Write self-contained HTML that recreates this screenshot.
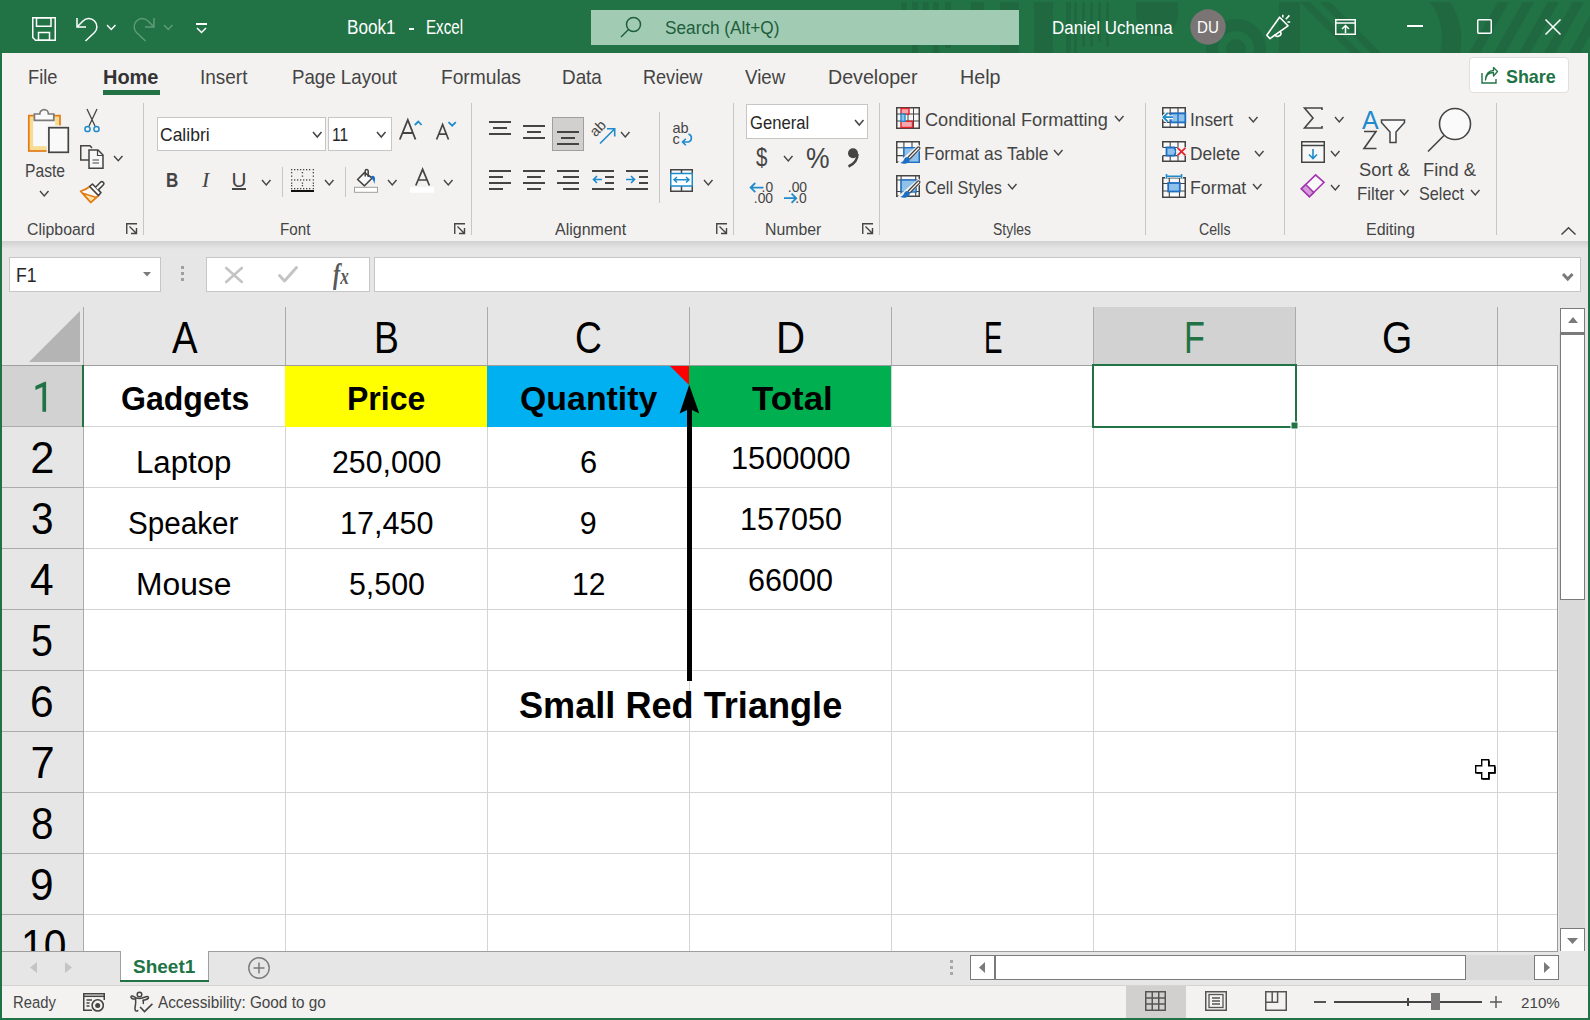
<!DOCTYPE html>
<html><head><meta charset="utf-8">
<style>
*{margin:0;padding:0;box-sizing:border-box}
html,body{width:1590px;height:1020px;overflow:hidden}
body{position:relative;background:#217346;font-family:"Liberation Sans",sans-serif}
.a{position:absolute}
.t{position:absolute;white-space:nowrap;line-height:1;transform-origin:0 0}
svg{position:absolute;overflow:visible}
</style></head><body>
<div class="a" style="left:2px;top:53px;width:1586px;height:188px;background:#f3f2f1;"></div>
<div class="a" style="left:2px;top:241px;width:1586px;height:710px;background:#e6e6e6;"></div>
<div class="a" style="left:2px;top:241px;width:1586px;height:8px;background:linear-gradient(#d0d0d0,#e6e6e6);"></div>
<div class="a" style="left:84px;top:366px;width:1473px;height:585px;background:#ffffff;"></div>
<div class="a" style="left:0px;top:0px;width:1590px;height:53px;background:#217346;"></div>
<svg style="left:0px;top:0px" width="1590" height="53" viewBox="0 0 1590 53"><defs><clipPath id="tb"><rect x="0" y="2" width="1590" height="51"></rect></clipPath></defs>
      <g clip-path="url(#tb)" fill="#1f6840">
      <rect x="901" y="2" width="6" height="8"></rect>
      <rect x="912" y="2" width="6" height="51"></rect>
      <rect x="923" y="2" width="6" height="8"></rect>
      <rect x="933" y="2" width="6" height="51"></rect>
      <rect x="945" y="2" width="6" height="46"></rect>
      <rect x="971" y="2" width="13" height="8"></rect>
      <rect x="1000" y="2" width="19" height="51"></rect>
      <rect x="1034" y="2" width="19" height="51"></rect>
      <rect x="1066" y="2" width="5" height="51"></rect>
      <rect x="1074" y="2" width="3" height="51"></rect>
      <rect x="1082" y="2" width="3" height="45"></rect>
      <rect x="1090" y="2" width="3" height="45"></rect>
      <rect x="1098" y="2" width="3" height="40"></rect>
      <rect x="1106" y="2" width="3" height="45"></rect>
      <path d="M1136 2 H1178 V15 A21 21 0 0 1 1136 15 Z"></path>
      <circle cx="1236" cy="49" r="30"></circle>
      </g>
      <circle cx="1236" cy="49" r="18" fill="#217346" clip-path="url(#tb)"></circle>
      <circle cx="1236" cy="49" r="10" fill="#1f6840" clip-path="url(#tb)"></circle>
      <g clip-path="url(#tb)" fill="#1f6840">
      <path d="M1279 2 H1300 L1300 53 H1279 Z"></path>
      <path d="M1300 2 H1310 L1361 53 H1351 Z"></path>
      <path d="M1320 2 H1330 L1381 53 H1371 Z"></path>
      <path d="M1430 2 A60 60 0 0 1 1440 53 H1460 A70 70 0 0 0 1450 2 Z"></path>

      <path d="M1498 2 H1509 L1480 53 H1469 Z"></path>
      <path d="M1523 2 H1534 L1505 53 H1494 Z"></path>
      <path d="M1548 2 H1559 L1530 53 H1519 Z"></path>
      <path d="M1573 2 H1584 L1555 53 H1544 Z"></path>
      <path d="M1598 2 H1609 L1580 53 H1569 Z"></path>
      </g></svg>
<svg style="left:32px;top:17px" width="24" height="24" viewBox="0 0 24 24"><path d="M0.75 0.75 H23.25 V23.25 H3.5 L0.75 20.5 Z" fill="none" stroke="#ffffff" stroke-width="1.5"></path><rect x="4.5" y="0.75" width="14.5" height="8.5" fill="none" stroke="#ffffff" stroke-width="1.5"></rect><rect x="6.5" y="15.5" width="11" height="7.75" fill="none" stroke="#ffffff" stroke-width="1.5"></rect></svg>
<svg style="left:76px;top:17px" width="22" height="24" viewBox="0 0 22 24"><path d="M1 1 V10 H10" fill="none" stroke="#ffffff" stroke-width="1.5"></path><path d="M1.5 9.5 L7 4 A8 8 0 0 1 18.5 15.5 L9.5 24" fill="none" stroke="#ffffff" stroke-width="1.5"></path></svg>
<svg style="left:105px;top:23px" width="12.5" height="8.5" viewBox="0 0 12.5 8.5"><polyline points="2,2 6.25,6.5 10.5,2" fill="none" stroke="#ffffff" stroke-width="1.4"></polyline></svg>
<svg style="left:133px;top:17px" width="22" height="24" viewBox="0 0 22 24"><path d="M21 1 V10 H12" fill="none" stroke="#5d9c79" stroke-width="1.5"></path><path d="M20.5 9.5 L15 4 A8 8 0 0 0 3.5 15.5 L12.5 24" fill="none" stroke="#5d9c79" stroke-width="1.5"></path></svg>
<svg style="left:162px;top:23px" width="12.5" height="8.5" viewBox="0 0 12.5 8.5"><polyline points="2,2 6.25,6.5 10.5,2" fill="none" stroke="#5d9c79" stroke-width="1.4"></polyline></svg>
<div class="a" style="left:196px;top:23px;width:11px;height:2px;background:#ffffff;"></div>
<svg style="left:195px;top:25.5px" width="13" height="8.5" viewBox="0 0 13 8.5"><polyline points="2,2 6.5,6.5 11,2" fill="none" stroke="#ffffff" stroke-width="1.5"></polyline></svg>
<div class="t" style="left: 347.32px; top: 18.1px; font-size: 19.57px; color: rgb(255, 255, 255); transform: scaleX(0.877);">Book1</div>
<div class="a" style="left:409px;top:28px;width:5px;height:1.6px;background:#ffffff;"></div>
<div class="t" style="left: 425.53px; top: 18.1px; font-size: 19.57px; color: rgb(255, 255, 255); transform: scaleX(0.7744);">Excel</div>
<div class="a" style="left:591px;top:10px;width:428px;height:35px;background:#a1cbb3;"></div>
<svg style="left:620px;top:16px" width="22" height="22" viewBox="0 0 22 22"><circle cx="13.5" cy="8.5" r="7" fill="none" stroke="#1f5e3c" stroke-width="1.5"></circle><line x1="8.5" y1="13.5" x2="1" y2="21" stroke="#1f5e3c" stroke-width="1.5"></line></svg>
<div class="t" style="left: 665px; top: 18.01px; font-size: 19.28px; color: rgb(31, 94, 60); transform: scaleX(0.8939);">Search (Alt+Q)</div>
<div class="t" style="left: 1052.12px; top: 18.01px; font-size: 19.28px; color: rgb(255, 255, 255); transform: scaleX(0.8799);">Daniel Uchenna</div>
<svg style="left:1190px;top:9px" width="36" height="36" viewBox="0 0 36 36"><circle cx="18" cy="18" r="17.7" fill="#7a7574"></circle></svg>
<div class="t" style="left: 1197.09px; top: 20px; font-size: 16.67px; color: rgb(255, 255, 255); transform: scaleX(0.9079);">DU</div>
<svg style="left:1255px;top:8px" width="40" height="35" viewBox="0 0 40 35"><path d="M11.8 27.2 L15 30.6 L33 17.8 L24.6 9.2 Z" fill="none" stroke="#ffffff" stroke-width="1.6" stroke-linejoin="round"></path><path d="M19.6 26.4 A3.2 3.2 0 1 0 25.6 23.8" fill="none" stroke="#ffffff" stroke-width="1.6"></path><path d="M27.8 6.8 V9.6 M30.8 11.2 L34.4 7.4 M32.4 14 H35.2" stroke="#ffffff" stroke-width="1.6"></path></svg>
<svg style="left:1335px;top:19px" width="21" height="16" viewBox="0 0 21 16"><rect x="0.75" y="0.75" width="19.5" height="14.5" fill="none" stroke="#ffffff" stroke-width="1.5"></rect><line x1="1" y1="4" x2="20" y2="4" stroke="#ffffff" stroke-width="1.5"></line><path d="M10.5 14 V6.5 M7 10 L10.5 6.5 L14 10" fill="none" stroke="#ffffff" stroke-width="1.5"></path></svg>
<div class="a" style="left:1407px;top:25.3px;width:16px;height:1.3px;background:#ffffff;"></div>
<svg style="left:1477px;top:19px" width="15" height="15" viewBox="0 0 15 15"><rect x="0.75" y="0.75" width="13.5" height="13.5" rx="1" fill="none" stroke="#ffffff" stroke-width="1.5"></rect></svg>
<svg style="left:1545px;top:19px" width="16" height="16" viewBox="0 0 16 16"><path d="M0.5 0.5 L15.5 15.5 M15.5 0.5 L0.5 15.5" stroke="#ffffff" stroke-width="1.5"></path></svg>
<div class="t" style="left: 27.6px; top: 67px; font-size: 20.29px; color: rgb(68, 68, 68); transform: scaleX(0.9013);">File</div>
<div class="t" style="left: 199.67px; top: 67px; font-size: 20.29px; color: rgb(68, 68, 68); transform: scaleX(0.9344);">Insert</div>
<div class="t" style="left: 292.08px; top: 67px; font-size: 20.29px; color: rgb(68, 68, 68); transform: scaleX(0.9218);">Page Layout</div>
<div class="t" style="left: 441.05px; top: 67px; font-size: 20.29px; color: rgb(68, 68, 68); transform: scaleX(0.9451);">Formulas</div>
<div class="t" style="left: 562.07px; top: 67px; font-size: 20.29px; color: rgb(68, 68, 68); transform: scaleX(0.9304);">Data</div>
<div class="t" style="left: 643.11px; top: 67px; font-size: 20.29px; color: rgb(68, 68, 68); transform: scaleX(0.8914);">Review</div>
<div class="t" style="left: 745.3px; top: 67px; font-size: 20.29px; color: rgb(68, 68, 68); transform: scaleX(0.9216);">View</div>
<div class="t" style="left: 827.63px; top: 67px; font-size: 20.29px; color: rgb(68, 68, 68); transform: scaleX(0.9685);">Developer</div>
<div class="t" style="left: 959.83px; top: 67px; font-size: 20.29px; color: rgb(68, 68, 68); transform: scaleX(0.9695);">Help</div>
<div class="t" style="left: 103.02px; top: 67px; font-size: 20.29px; color: rgb(51, 51, 51); font-weight: bold; transform: scaleX(0.9842);">Home</div>
<div class="a" style="left:103px;top:90px;width:57px;height:5px;background:#217346;"></div>
<div class="a" style="left:1469px;top:57px;width:100px;height:36px;background:#ffffff;border:1px solid #e1dfdd;border-radius:4px"></div>
<svg style="left:1481px;top:67px" width="17" height="17" viewBox="0 0 17 17"><path d="M1 6 V16 H15 V12" fill="none" stroke="#217346" stroke-width="1.4"></path><path d="M4.5 13 C5 7 9 5.5 12.5 5.5 V9 L16.5 4.5 L12.5 0.5 V3.5 C8 3.5 4.5 7 4.5 13z" fill="none" stroke="#217346" stroke-width="1.3" stroke-linejoin="round"></path></svg>
<div class="t" style="left: 1506px; top: 67.31px; font-size: 19.28px; color: rgb(33, 115, 70); font-weight: bold; transform: scaleX(0.9288);">Share</div>
<div class="a" style="left:143px;top:103px;width:1px;height:132px;background:#c8c6c4;"></div>
<div class="a" style="left:471px;top:103px;width:1px;height:132px;background:#c8c6c4;"></div>
<div class="a" style="left:733px;top:103px;width:1px;height:132px;background:#c8c6c4;"></div>
<div class="a" style="left:879px;top:103px;width:1px;height:132px;background:#c8c6c4;"></div>
<div class="a" style="left:1145px;top:103px;width:1px;height:132px;background:#c8c6c4;"></div>
<div class="a" style="left:1284px;top:103px;width:1px;height:132px;background:#c8c6c4;"></div>
<div class="a" style="left:1496px;top:103px;width:1px;height:132px;background:#c8c6c4;"></div>
<div class="t" style="left: 26.5px; top: 222.01px; font-size: 15.94px; color: rgb(68, 68, 68); transform: scaleX(0.9948);">Clipboard</div>
<div class="t" style="left: 280.05px; top: 222.01px; font-size: 15.94px; color: rgb(68, 68, 68); transform: scaleX(0.9535);">Font</div>
<div class="t" style="left: 554.5px; top: 222.01px; font-size: 15.94px; color: rgb(68, 68, 68); transform: scaleX(1.0036);">Alignment</div>
<div class="t" style="left: 765.01px; top: 222.01px; font-size: 15.94px; color: rgb(68, 68, 68); transform: scaleX(0.9933);">Number</div>
<div class="t" style="left: 993px; top: 222.01px; font-size: 15.94px; color: rgb(68, 68, 68); transform: scaleX(0.8749);">Styles</div>
<div class="t" style="left: 1199px; top: 222.01px; font-size: 15.94px; color: rgb(68, 68, 68); transform: scaleX(0.8885);">Cells</div>
<div class="t" style="left: 1366px; top: 222.01px; font-size: 15.94px; color: rgb(68, 68, 68); transform: scaleX(1.0028);">Editing</div>
<svg style="left:126px;top:223px" width="12" height="12" viewBox="0 0 12 12"><path d="M0.75 11 V0.75 H11" fill="none" stroke="#444444" stroke-width="1.4"></path><path d="M3.5 3.5 L10.5 10.5 M5 10.5 H10.5 V5" fill="none" stroke="#444444" stroke-width="1.4"></path></svg>
<svg style="left:454px;top:223px" width="12" height="12" viewBox="0 0 12 12"><path d="M0.75 11 V0.75 H11" fill="none" stroke="#444444" stroke-width="1.4"></path><path d="M3.5 3.5 L10.5 10.5 M5 10.5 H10.5 V5" fill="none" stroke="#444444" stroke-width="1.4"></path></svg>
<svg style="left:716px;top:223px" width="12" height="12" viewBox="0 0 12 12"><path d="M0.75 11 V0.75 H11" fill="none" stroke="#444444" stroke-width="1.4"></path><path d="M3.5 3.5 L10.5 10.5 M5 10.5 H10.5 V5" fill="none" stroke="#444444" stroke-width="1.4"></path></svg>
<svg style="left:862px;top:223px" width="12" height="12" viewBox="0 0 12 12"><path d="M0.75 11 V0.75 H11" fill="none" stroke="#444444" stroke-width="1.4"></path><path d="M3.5 3.5 L10.5 10.5 M5 10.5 H10.5 V5" fill="none" stroke="#444444" stroke-width="1.4"></path></svg>
<svg style="left:1561px;top:227px" width="15" height="8" viewBox="0 0 15 8"><polyline points="0.5,7.5 7.5,0.8 14.5,7.5" fill="none" stroke="#444444" stroke-width="1.5"></polyline></svg>
<svg style="left:28px;top:109px" width="42" height="46" viewBox="0 0 42 46">
      <rect x="0.8" y="6.6" width="31.2" height="35.4" fill="#f9dc93" stroke="#e27c13" stroke-width="1.7"></rect>
      <rect x="5.1" y="10.9" width="22" height="26.2" fill="#f9f9f9"></rect>
      <path d="M6.4 11.4 V5 H11.8 A4.3 4.3 0 0 1 20.4 5 H25.8 V11.4 Z" fill="#f9f9f9" stroke="#7a7a7a" stroke-width="1.7"></path>
      <rect x="18.6" y="16.4" width="24" height="30" fill="#f3f2f1"></rect>
      <rect x="20.9" y="18.7" width="19.4" height="24.6" fill="#f9f9f9" stroke="#444444" stroke-width="1.7"></rect></svg>
<div class="t" style="left: 24.64px; top: 161.6px; font-size: 18.26px; color: rgb(68, 68, 68); transform: scaleX(0.8568);">Paste</div>
<svg style="left:38px;top:189px" width="12.5" height="9" viewBox="0 0 12.5 9"><polyline points="2,2 6.25,7 10.5,2" fill="none" stroke="#444444" stroke-width="1.4"></polyline></svg>
<svg style="left:84px;top:109px" width="16" height="24" viewBox="0 0 16 24"><path d="M3 0 L11 17 M13 0 L5 17" stroke="#444444" stroke-width="1.3" fill="none"></path><circle cx="3.5" cy="20" r="2.6" fill="none" stroke="#1e8bcd" stroke-width="1.5"></circle><circle cx="12.5" cy="20" r="2.6" fill="none" stroke="#1e8bcd" stroke-width="1.5"></circle></svg>
<svg style="left:80px;top:145px" width="24" height="24" viewBox="0 0 24 24"><path d="M11 15 H0.75 V0.75 H10 L12 3" fill="none" stroke="#444444" stroke-width="1.5"></path><path d="M9 5 H18 L23 10 V23.25 H9 Z" fill="#f7f7f7" stroke="#444444" stroke-width="1.5"></path><path d="M17.5 5 V10.5 H23" fill="none" stroke="#444444" stroke-width="1.2"></path><path d="M12.5 15 H19 M12.5 18 H19" stroke="#444444" stroke-width="1.2"></path></svg>
<svg style="left:112px;top:154px" width="12.5" height="8.8" viewBox="0 0 12.5 8.8"><polyline points="2,2 6.25,6.8 10.5,2" fill="none" stroke="#444444" stroke-width="1.4"></polyline></svg>
<svg style="left:80px;top:180px" width="25" height="25" viewBox="0 0 25 25"><path d="M9.7 6.5 Q6 9.8 0.6 11.2 L10.7 22.5 L18.5 15.5 Z" fill="#f9f9f9" stroke="#e27c13" stroke-width="1.7" stroke-linejoin="round"></path><path d="M2.8 13.3 L16.3 17.5 L10.7 22.3 Z" fill="#fde3a7" stroke="#e27c13" stroke-width="1.5" stroke-linejoin="round"></path><path d="M9.7 6.5 L12.4 4 L21 12.6 L18.5 15.5 Z" fill="#fff" stroke="#444444" stroke-width="1.6" stroke-linejoin="round"></path><path d="M15.6 7.2 L20.5 2.3 A1.9 1.9 0 0 1 23.2 5 L18.3 9.9" fill="#fff" stroke="#444444" stroke-width="1.6"></path></svg>
<div class="a" style="left:157px;top:117px;width:169px;height:34px;background:#ffffff;border:1px solid #c8c6c4"></div>
<div class="t" style="left: 159.5px; top: 126.01px; font-size: 18.84px; color: rgb(38, 38, 38); transform: scaleX(0.9296);">Calibri</div>
<svg style="left:311px;top:130px" width="12.5" height="9" viewBox="0 0 12.5 9"><polyline points="2,2 6.25,7 10.5,2" fill="none" stroke="#444444" stroke-width="1.5"></polyline></svg>
<div class="a" style="left:328px;top:117px;width:64px;height:34px;background:#ffffff;border:1px solid #c8c6c4"></div>
<div class="t" style="left: 331.67px; top: 126.01px; font-size: 18.84px; color: rgb(38, 38, 38); transform: scaleX(0.83);">11</div>
<svg style="left:374.5px;top:130px" width="12.5" height="9" viewBox="0 0 12.5 9"><polyline points="2,2 6.25,7 10.5,2" fill="none" stroke="#444444" stroke-width="1.5"></polyline></svg>
<svg style="left:395px;top:112px" width="65" height="32" viewBox="0 0 65 32"><path d="M4.8 27.5 L12.8 8 L20.5 27.5 M7.4 21 H18" fill="none" stroke="#444444" stroke-width="1.8" stroke-linejoin="miter"></path>
      <polyline points="19.8,13 23.3,9.5 26.6,13" fill="none" stroke="#1e8bcd" stroke-width="1.8"></polyline>
      <path d="M41.6 27.5 L47.6 12.5 L53.5 27.5 M43.6 22.2 H51.6" fill="none" stroke="#444444" stroke-width="1.7"></path>
      <polyline points="53.5,10.1 57.2,13.7 60.8,10.1" fill="none" stroke="#1e8bcd" stroke-width="1.8"></polyline></svg>
<div class="t" style="left: 166.18px; top: 169.61px; font-size: 20.72px; color: rgb(68, 68, 68); font-weight: bold; transform: scaleX(0.8214);">B</div>
<div class="t" style="left: 202.06px; top: 169.61px; font-size: 20.72px; color: rgb(68, 68, 68); font-style: italic; font-family: &quot;Liberation Serif&quot;, serif; transform: scaleX(1.0556);">I</div>
<div class="t" style="left: 231.5px; top: 169.61px; font-size: 20.72px; color: rgb(68, 68, 68); transform: scaleX(1);">U</div>
<div class="a" style="left:232px;top:188px;width:14px;height:1.5px;background:#444444;"></div>
<svg style="left:260px;top:178px" width="12.5" height="9" viewBox="0 0 12.5 9"><polyline points="2,2 6.25,7 10.5,2" fill="none" stroke="#444444" stroke-width="1.4"></polyline></svg>
<div class="a" style="left:282px;top:167px;width:1px;height:30px;background:#c8c6c4;"></div>
<svg style="left:291px;top:169px" width="23" height="23" viewBox="0 0 23 23"><g fill="#444444"><rect x="0" y="0" width="1.3" height="1.3"></rect><rect x="3" y="0" width="1.3" height="1.3"></rect><rect x="6" y="0" width="1.3" height="1.3"></rect><rect x="9" y="0" width="1.3" height="1.3"></rect><rect x="12" y="0" width="1.3" height="1.3"></rect><rect x="15" y="0" width="1.3" height="1.3"></rect><rect x="18" y="0" width="1.3" height="1.3"></rect><rect x="21.7" y="0" width="1.3" height="1.3"></rect><rect x="0" y="10.3" width="1.3" height="1.3"></rect><rect x="3" y="10.3" width="1.3" height="1.3"></rect><rect x="6" y="10.3" width="1.3" height="1.3"></rect><rect x="9" y="10.3" width="1.3" height="1.3"></rect><rect x="12" y="10.3" width="1.3" height="1.3"></rect><rect x="15" y="10.3" width="1.3" height="1.3"></rect><rect x="18" y="10.3" width="1.3" height="1.3"></rect><rect x="21.7" y="10.3" width="1.3" height="1.3"></rect><rect x="0" y="19" width="1.3" height="1.3"></rect><rect x="3" y="19" width="1.3" height="1.3"></rect><rect x="6" y="19" width="1.3" height="1.3"></rect><rect x="9" y="19" width="1.3" height="1.3"></rect><rect x="12" y="19" width="1.3" height="1.3"></rect><rect x="15" y="19" width="1.3" height="1.3"></rect><rect x="18" y="19" width="1.3" height="1.3"></rect><rect x="21.7" y="19" width="1.3" height="1.3"></rect><rect x="0" y="3" width="1.3" height="1.3"></rect><rect x="0" y="6.5" width="1.3" height="1.3"></rect><rect x="0" y="13.5" width="1.3" height="1.3"></rect><rect x="0" y="16" width="1.3" height="1.3"></rect><rect x="10.8" y="3" width="1.3" height="1.3"></rect><rect x="10.8" y="6.5" width="1.3" height="1.3"></rect><rect x="10.8" y="13.5" width="1.3" height="1.3"></rect><rect x="10.8" y="16" width="1.3" height="1.3"></rect><rect x="21.7" y="3" width="1.3" height="1.3"></rect><rect x="21.7" y="6.5" width="1.3" height="1.3"></rect><rect x="21.7" y="13.5" width="1.3" height="1.3"></rect><rect x="21.7" y="16" width="1.3" height="1.3"></rect></g>
      <rect x="0" y="21" width="23" height="2" fill="#111"></rect></svg>
<svg style="left:323px;top:178px" width="12.5" height="9" viewBox="0 0 12.5 9"><polyline points="2,2 6.25,7 10.5,2" fill="none" stroke="#444444" stroke-width="1.4"></polyline></svg>
<div class="a" style="left:345px;top:167px;width:1px;height:30px;background:#c8c6c4;"></div>
<svg style="left:354px;top:168px" width="25" height="26" viewBox="0 0 25 26"><path d="M3.6 11.5 L10.5 4.6 L18.2 10 L10.5 17.8 Z" fill="#f9f9f9" stroke="#444444" stroke-width="1.6" stroke-linejoin="round"></path>
      <path d="M11.2 8.5 V3 A1.5 1.5 0 0 1 14.2 3 V9" fill="none" stroke="#444444" stroke-width="1.5"></path>
      <path d="M17 8.5 C19.5 6.5 21.5 8.5 21 12 C20.8 14 20.5 15 20.3 16 C19.8 13.5 19.3 11.8 17.5 10.5 Z" fill="#1e6fc4"></path>
      <rect x="0.5" y="19.3" width="23" height="5" fill="#ffffff" stroke="#a19f9d" stroke-width="1"></rect></svg>
<svg style="left:386px;top:178px" width="12.5" height="9" viewBox="0 0 12.5 9"><polyline points="2,2 6.25,7 10.5,2" fill="none" stroke="#444444" stroke-width="1.4"></polyline></svg>
<svg style="left:410px;top:168px" width="25" height="26" viewBox="0 0 25 26"><path d="M5.8 17.5 L12.6 1.3 L19.4 17.5 M8.2 12 H17" fill="none" stroke="#444444" stroke-width="1.7"></path><rect x="0" y="19.2" width="24" height="5.5" fill="#ffffff"></rect></svg>
<svg style="left:442px;top:178px" width="12.5" height="9" viewBox="0 0 12.5 9"><polyline points="2,2 6.25,7 10.5,2" fill="none" stroke="#444444" stroke-width="1.4"></polyline></svg>
<div class="a" style="left:489px;top:121px;width:22px;height:2px;background:#444444;"></div>
<div class="a" style="left:493px;top:127px;width:14px;height:2px;background:#444444;"></div>
<div class="a" style="left:489px;top:133px;width:22px;height:2px;background:#444444;"></div>
<div class="a" style="left:523px;top:125px;width:22px;height:2px;background:#444444;"></div>
<div class="a" style="left:527px;top:131px;width:14px;height:2px;background:#444444;"></div>
<div class="a" style="left:523px;top:137px;width:22px;height:2px;background:#444444;"></div>
<div class="a" style="left:552px;top:117px;width:32px;height:34px;background:#d2d0ce;border:1px solid #a19f9d"></div>
<div class="a" style="left:557px;top:131px;width:22px;height:2px;background:#444444;"></div>
<div class="a" style="left:561px;top:137px;width:14px;height:2px;background:#444444;"></div>
<div class="a" style="left:557px;top:143px;width:22px;height:2px;background:#444444;"></div>
<svg style="left:591px;top:120px" width="26" height="25" viewBox="0 0 26 25"><text x="0" y="0" transform="translate(4.5,17.5) rotate(-45)" font-family="Liberation Sans" font-size="14.5" fill="#444444">ab</text><path d="M9 23.5 L23 9.5 M16 8.8 H23.7 V16.5" fill="none" stroke="#1e8bcd" stroke-width="1.6"></path></svg>
<svg style="left:619px;top:130px" width="12.5" height="9" viewBox="0 0 12.5 9"><polyline points="2,2 6.25,7 10.5,2" fill="none" stroke="#444444" stroke-width="1.4"></polyline></svg>
<div class="a" style="left:659px;top:112px;width:1px;height:91px;background:#c8c6c4;"></div>
<svg style="left:673px;top:121px" width="24" height="26" viewBox="0 0 24 26"><text x="-0.5" y="11.5" font-family="Liberation Sans" font-size="14.5" fill="#444444">ab</text><text x="-0.5" y="22.5" font-family="Liberation Sans" font-size="14.5" fill="#444444">c</text><path d="M15.5 13 A4.2 4.2 0 0 1 15.5 21 H9.5 M12.8 17.7 L9.5 21 L12.8 24.3" fill="none" stroke="#1e8bcd" stroke-width="1.6"></path></svg>
<div class="a" style="left:489px;top:170px;width:22px;height:2px;background:#444444;"></div>
<div class="a" style="left:489px;top:176px;width:14px;height:2px;background:#444444;"></div>
<div class="a" style="left:489px;top:182px;width:22px;height:2px;background:#444444;"></div>
<div class="a" style="left:489px;top:188px;width:14px;height:2px;background:#444444;"></div>
<div class="a" style="left:523px;top:170px;width:22px;height:2px;background:#444444;"></div>
<div class="a" style="left:527px;top:176px;width:14px;height:2px;background:#444444;"></div>
<div class="a" style="left:523px;top:182px;width:22px;height:2px;background:#444444;"></div>
<div class="a" style="left:527px;top:188px;width:14px;height:2px;background:#444444;"></div>
<div class="a" style="left:557px;top:170px;width:22px;height:2px;background:#444444;"></div>
<div class="a" style="left:563px;top:176px;width:16px;height:2px;background:#444444;"></div>
<div class="a" style="left:557px;top:182px;width:22px;height:2px;background:#444444;"></div>
<div class="a" style="left:563px;top:188px;width:16px;height:2px;background:#444444;"></div>
<div class="a" style="left:592px;top:170px;width:22px;height:2px;background:#444444;"></div>
<div class="a" style="left:605px;top:176px;width:9px;height:2px;background:#444444;"></div>
<div class="a" style="left:605px;top:182px;width:9px;height:2px;background:#444444;"></div>
<div class="a" style="left:592px;top:188px;width:22px;height:2px;background:#444444;"></div>
<svg style="left:592px;top:175px" width="10" height="10" viewBox="0 0 10 10"><path d="M10 4.5 H1.5 M5 1 L1.5 4.5 L5 8" fill="none" stroke="#1e8bcd" stroke-width="1.6"></path></svg>
<div class="a" style="left:626px;top:170px;width:22px;height:2px;background:#444444;"></div>
<div class="a" style="left:639px;top:176px;width:9px;height:2px;background:#444444;"></div>
<div class="a" style="left:639px;top:182px;width:9px;height:2px;background:#444444;"></div>
<div class="a" style="left:626px;top:188px;width:22px;height:2px;background:#444444;"></div>
<svg style="left:626px;top:175px" width="10" height="10" viewBox="0 0 10 10"><path d="M0 4.5 H8.5 M5 1 L8.5 4.5 L5 8" fill="none" stroke="#1e8bcd" stroke-width="1.6"></path></svg>
<svg style="left:670px;top:169px" width="23" height="23" viewBox="0 0 23 23"><rect x="0.75" y="0.75" width="21.5" height="21.5" fill="#f7f7f7" stroke="#444444" stroke-width="1.5"></rect><line x1="11.5" y1="1" x2="11.5" y2="5" stroke="#444444" stroke-width="1.5"></line><line x1="11.5" y1="17" x2="11.5" y2="22" stroke="#444444" stroke-width="1.5"></line><rect x="0.75" y="4.5" width="21.5" height="12.5" fill="#ffffff" stroke="#1e8bcd" stroke-width="1.5"></rect><path d="M4 10.75 H19 M7 8 L4 10.75 L7 13.5 M16 8 L19 10.75 L16 13.5" fill="none" stroke="#1e8bcd" stroke-width="1.5"></path></svg>
<svg style="left:702px;top:178px" width="12.5" height="9" viewBox="0 0 12.5 9"><polyline points="2,2 6.25,7 10.5,2" fill="none" stroke="#444444" stroke-width="1.4"></polyline></svg>
<div class="a" style="left:746px;top:104px;width:122px;height:35px;background:#ffffff;border:1px solid #c8c6c4"></div>
<div class="t" style="left: 749.5px; top: 113.01px; font-size: 19.13px; color: rgb(38, 38, 38); transform: scaleX(0.8691);">General</div>
<svg style="left:853px;top:118px" width="12.5" height="9" viewBox="0 0 12.5 9"><polyline points="2,2 6.25,7 10.5,2" fill="none" stroke="#444444" stroke-width="1.5"></polyline></svg>
<div class="t" style="left: 755.5px; top: 145.01px; color: rgb(68, 68, 68); font-size: 25px; transform: scaleX(0.8214);">$</div>
<svg style="left:782px;top:154px" width="12.5" height="9" viewBox="0 0 12.5 9"><polyline points="2,2 6.25,7 10.5,2" fill="none" stroke="#444444" stroke-width="1.4"></polyline></svg>
<div class="t" style="left: 806.12px; top: 142.5px; font-size: 30.14px; color: rgb(68, 68, 68); transform: scaleX(0.88);">%</div>
<svg style="left:847px;top:148px" width="12" height="19" viewBox="0 0 12 19"><circle cx="6" cy="5.2" r="5" fill="#444444"></circle><path d="M10.5 6 C10.5 12 7 16 1.5 18.5" fill="none" stroke="#444444" stroke-width="2.6"></path></svg>
<svg style="left:745px;top:175px" width="65" height="32" viewBox="0 0 65 32"><text x="16.6" y="16.5" font-family="Liberation Sans" font-size="14.5" fill="#444" lengthAdjust="spacingAndGlyphs" textLength="11.5">.0</text><text x="8.8" y="28.4" font-family="Liberation Sans" font-size="14.5" fill="#444" lengthAdjust="spacingAndGlyphs" textLength="19.3">.00</text>
      <path d="M18.5 12.6 H5.6 M10.3 8 L5.6 12.6 L10.3 17.2" fill="none" stroke="#1e8bcd" stroke-width="1.8"></path>
      <text x="42.8" y="16.5" font-family="Liberation Sans" font-size="14.5" fill="#444" lengthAdjust="spacingAndGlyphs" textLength="19.3">.00</text><text x="50.2" y="28.4" font-family="Liberation Sans" font-size="14.5" fill="#444" lengthAdjust="spacingAndGlyphs" textLength="11.5">.0</text>
      <path d="M39 23.2 H51.2 M46.6 18.6 L51.2 23.2 L46.6 27.8" fill="none" stroke="#1e8bcd" stroke-width="1.8"></path></svg>
<svg style="left:896px;top:107px" width="24" height="22" viewBox="0 0 24 22"><rect x="0.75" y="0.75" width="22.5" height="20.5" fill="#f7f7f7" stroke="#444444" stroke-width="1.5"></rect>
      <path d="M1 7 H23 M1 14 H23 M12 1 V21 M17.5 1 V21 M6 1 V21" stroke="#444444" stroke-width="1"></path>
      <rect x="5" y="1.5" width="8" height="5.5" fill="#f4a7ae" stroke="#e3242b" stroke-width="1.4"></rect>
      <rect x="5" y="14.3" width="11.5" height="6.2" fill="#f4a7ae" stroke="#e3242b" stroke-width="1.4"></rect>
      <rect x="5" y="7" width="4" height="7.3" fill="#8fc1ea" stroke="#1e8bcd" stroke-width="1.4"></rect></svg>
<div class="t" style="left: 924.5px; top: 110.81px; font-size: 18.55px; color: rgb(68, 68, 68); transform: scaleX(0.9805);">Conditional Formatting</div>
<svg style="left:1112.5px;top:114px" width="12.5" height="9" viewBox="0 0 12.5 9"><polyline points="2,2 6.25,7 10.5,2" fill="none" stroke="#444444" stroke-width="1.4"></polyline></svg>
<svg style="left:896px;top:141px" width="25" height="24" viewBox="0 0 25 24"><rect x="0.75" y="0.75" width="22.5" height="20.5" fill="#f9f9f9" stroke="#444444" stroke-width="1.5"></rect>
      <path d="M1 6.7 H23 M1 14.6 H23 M7.9 1 V21 M16 1 V21" stroke="#444444" stroke-width="1.1"></path>
      <rect x="7.9" y="6.7" width="15.3" height="14.6" fill="#8fc1ea" stroke="#1e6fc4" stroke-width="1.4"></rect>
      <path d="M3.5 23.5 L24.5 5.5" stroke="#f3f2f1" stroke-width="5.5"></path>
      <path d="M22.6 7.2 L13.4 16.6" stroke="#444444" stroke-width="3.8" stroke-linecap="round"></path><path d="M22.6 7.2 L13.4 16.6" stroke="#fafafa" stroke-width="1.3" stroke-linecap="round"></path>
      <path d="M12.8 16.6 C11.2 15.4 9 16.2 8.2 18.2 C7.4 20.2 6.2 21.3 4.2 21.8 C6.8 23.3 10.8 23.2 12.8 21 C13.9 19.8 14.2 17.8 12.8 16.6 Z" fill="#1e6fc4"></path></svg>
<div class="t" style="left: 923.58px; top: 144.81px; font-size: 18.84px; color: rgb(68, 68, 68); transform: scaleX(0.925);">Format as Table</div>
<svg style="left:1052px;top:148px" width="12.5" height="9" viewBox="0 0 12.5 9"><polyline points="2,2 6.25,7 10.5,2" fill="none" stroke="#444444" stroke-width="1.4"></polyline></svg>
<svg style="left:896px;top:175px" width="25" height="24" viewBox="0 0 25 24"><rect x="0.75" y="0.75" width="22.5" height="20.5" fill="#f9f9f9" stroke="#444444" stroke-width="1.5"></rect>
      <path d="M1 5 H23 M1 16.5 H23 M5.1 1 V21 M19.7 1 V21" stroke="#444444" stroke-width="1.1"></path>
      <rect x="5.1" y="5" width="15" height="12" fill="#8fc1ea" stroke="#1e6fc4" stroke-width="1.4"></rect>
      <path d="M3.5 23.5 L24.5 5.5" stroke="#f3f2f1" stroke-width="5.5"></path>
      <path d="M22.6 7.2 L13.4 16.6" stroke="#444444" stroke-width="3.8" stroke-linecap="round"></path><path d="M22.6 7.2 L13.4 16.6" stroke="#fafafa" stroke-width="1.3" stroke-linecap="round"></path>
      <path d="M12.8 16.6 C11.2 15.4 9 16.2 8.2 18.2 C7.4 20.2 6.2 21.3 4.2 21.8 C6.8 23.3 10.8 23.2 12.8 21 C13.9 19.8 14.2 17.8 12.8 16.6 Z" fill="#1e6fc4"></path></svg>
<div class="t" style="left: 924.5px; top: 178.7px; font-size: 18.84px; color: rgb(68, 68, 68); transform: scaleX(0.8642);">Cell Styles</div>
<svg style="left:1006px;top:182px" width="12.5" height="9" viewBox="0 0 12.5 9"><polyline points="2,2 6.25,7 10.5,2" fill="none" stroke="#444444" stroke-width="1.4"></polyline></svg>
<svg style="left:1162px;top:107px" width="25" height="23" viewBox="0 0 25 23"><rect x="0.75" y="0.75" width="22.5" height="19.5" fill="#f9f9f9" stroke="#444444" stroke-width="1.5"></rect><path d="M1 6.4 H23 M1 15.4 H23 M8.2 1 V20 M16 1 V20" stroke="#444444" stroke-width="1.1"></path><rect x="8.7" y="6.4" width="14.6" height="9" fill="#8fc1ea" stroke="#1e6fc4" stroke-width="1.8"></rect><path d="M16 6.4 V15.4" stroke="#1e6fc4" stroke-width="1.3"></path><path d="M11 10.2 H1.5 M5.8 5.8 L1.4 10.2 L5.8 14.6" fill="none" stroke="#f9f9f9" stroke-width="4"></path><path d="M11 10.2 H1.5 M5.8 5.8 L1.4 10.2 L5.8 14.6" fill="none" stroke="#1e8bcd" stroke-width="1.8"></path></svg>
<div class="t" style="left: 1190.07px; top: 110.81px; font-size: 18.55px; color: rgb(68, 68, 68); transform: scaleX(0.9308);">Insert</div>
<svg style="left:1247px;top:115px" width="12.5" height="9" viewBox="0 0 12.5 9"><polyline points="2,2 6.25,7 10.5,2" fill="none" stroke="#444444" stroke-width="1.4"></polyline></svg>
<svg style="left:1162px;top:141px" width="25" height="23" viewBox="0 0 25 23"><rect x="0.75" y="0.75" width="22.5" height="19.5" fill="#f9f9f9"></rect><path d="M0.75 6.5 V0.75 H23.25 V6.5 M0.75 14.6 V20.25 H23.25 V14.6" fill="none" stroke="#444444" stroke-width="1.5"></path><path d="M1 6.5 H23 M1 14.6 H23 M8.2 1 V20 M16 1 V20" stroke="#444444" stroke-width="1.1"></path><path d="M4.5 6.5 H12.3 L14.2 10.5 L12.3 14.6 H4.5 Z" fill="#8fc1ea" stroke="#1e6fc4" stroke-width="1.8"></path><circle cx="19.6" cy="10.5" r="5.6" fill="#f3f3f3"></circle><path d="M15.6 6.8 L23.4 14.3 M23.4 6.8 L15.6 14.3" stroke="#e3242b" stroke-width="1.8"></path></svg>
<div class="t" style="left: 1190.07px; top: 144.71px; font-size: 18.7px; color: rgb(68, 68, 68); transform: scaleX(0.9311);">Delete</div>
<svg style="left:1253px;top:149px" width="12.5" height="9" viewBox="0 0 12.5 9"><polyline points="2,2 6.25,7 10.5,2" fill="none" stroke="#444444" stroke-width="1.4"></polyline></svg>
<svg style="left:1162px;top:174px" width="25" height="25" viewBox="0 0 25 25"><rect x="0.75" y="3.75" width="22.5" height="19.5" fill="#f9f9f9" stroke="#444444" stroke-width="1.5"></rect><path d="M1 9.5 H23 M1 17 H23 M7.3 4 V23 M17.5 4 V23" stroke="#444444" stroke-width="1.1"></path><rect x="6.2" y="9" width="11.6" height="8.5" fill="#8fc1ea" stroke="#1e6fc4" stroke-width="1.8"></rect><path d="M4.5 0 V4.5 M19.5 0 V4.5 M4.5 2.2 H19.5" stroke="#f3f2f1" stroke-width="3"></path><path d="M4.5 0 V4.5 M19.5 0 V4.5 M4.5 2.2 H19.5" stroke="#1e8bcd" stroke-width="1.6"></path></svg>
<div class="t" style="left: 1190.06px; top: 178.7px; font-size: 18.84px; color: rgb(68, 68, 68); transform: scaleX(0.9428);">Format</div>
<svg style="left:1251px;top:182px" width="12.5" height="9" viewBox="0 0 12.5 9"><polyline points="2,2 6.25,7 10.5,2" fill="none" stroke="#444444" stroke-width="1.4"></polyline></svg>
<svg style="left:1303px;top:107px" width="20" height="22" viewBox="0 0 20 22"><path d="M19 3 V1 H1.5 L10 11 L1.5 21 H19 V19" fill="none" stroke="#444444" stroke-width="1.6"></path></svg>
<svg style="left:1333px;top:115px" width="12.5" height="9" viewBox="0 0 12.5 9"><polyline points="2,2 6.25,7 10.5,2" fill="none" stroke="#444444" stroke-width="1.4"></polyline></svg>
<svg style="left:1301px;top:141px" width="24" height="22" viewBox="0 0 24 22"><rect x="0.75" y="0.75" width="22.5" height="20.5" fill="#f7f7f7" stroke="#444444" stroke-width="1.5"></rect><line x1="1" y1="4.5" x2="23" y2="4.5" stroke="#444444" stroke-width="1.5"></line><path d="M12 8 V17 M8 13.5 L12 17.5 L16 13.5" fill="none" stroke="#1e8bcd" stroke-width="1.6"></path></svg>
<svg style="left:1329px;top:149px" width="12.5" height="9" viewBox="0 0 12.5 9"><polyline points="2,2 6.25,7 10.5,2" fill="none" stroke="#444444" stroke-width="1.4"></polyline></svg>
<svg style="left:1301px;top:174px" width="24" height="24" viewBox="0 0 24 24"><path d="M14.6 0.9 L23 8.3 L8.4 22.7 L0.4 14.7 Z" fill="#f9f9f9" stroke="#a333b0" stroke-width="1.6" stroke-linejoin="miter"></path><path d="M0.4 14.7 L4.7 10.5 L12.8 18.4 L8.4 22.7 Z" fill="#d59ad9" stroke="#a333b0" stroke-width="1.6"></path></svg>
<svg style="left:1329px;top:183px" width="12.5" height="9" viewBox="0 0 12.5 9"><polyline points="2,2 6.25,7 10.5,2" fill="none" stroke="#444444" stroke-width="1.4"></polyline></svg>
<svg style="left:1362px;top:110px" width="44" height="41" viewBox="0 0 44 41"><text x="0" y="18.5" font-family="Liberation Sans" font-size="25" fill="#1e8bcd" textLength="15">A</text><path d="M2 21.5 H14 L2 38.5 H14.5" fill="none" stroke="#444444" stroke-width="1.6"></path><path d="M19.5 10 H42.5 V12.5 L34 22 V32.5 H28 V22 L19.5 12.5 Z" fill="#f9f9f9" stroke="#444444" stroke-width="1.5"></path></svg>
<div class="t" style="left: 1358.5px; top: 161.51px; font-size: 17.83px; color: rgb(68, 68, 68); transform: scaleX(1.0272);">Sort &amp;</div>
<div class="t" style="left: 1356.56px; top: 185.71px; font-size: 17.97px; color: rgb(68, 68, 68); transform: scaleX(0.9379);">Filter</div>
<svg style="left:1398px;top:188px" width="12.5" height="9" viewBox="0 0 12.5 9"><polyline points="2,2 6.25,7 10.5,2" fill="none" stroke="#444444" stroke-width="1.4"></polyline></svg>
<svg style="left:1426px;top:107px" width="47" height="47" viewBox="0 0 47 47"><circle cx="29" cy="17" r="15.5" fill="#fafafa" stroke="#444444" stroke-width="1.6"></circle><line x1="18" y1="28.5" x2="2" y2="44.5" stroke="#444444" stroke-width="1.6"></line></svg>
<div class="t" style="left: 1422.97px; top: 161.51px; font-size: 17.83px; color: rgb(68, 68, 68); transform: scaleX(1.027);">Find &amp;</div>
<div class="t" style="left: 1419px; top: 185.71px; font-size: 17.97px; color: rgb(68, 68, 68); transform: scaleX(0.9016);">Select</div>
<svg style="left:1468.5px;top:188px" width="12.5" height="9" viewBox="0 0 12.5 9"><polyline points="2,2 6.25,7 10.5,2" fill="none" stroke="#444444" stroke-width="1.4"></polyline></svg>
<div class="a" style="left:9px;top:257px;width:152px;height:35px;background:#ffffff;border:1px solid #c6c6c6"></div>
<div class="t" style="left: 16.09px; top: 265.7px; font-size: 19.42px; color: rgb(38, 38, 38); transform: scaleX(0.9111);">F1</div>
<svg style="left:142.5px;top:272px" width="8" height="4.5" viewBox="0 0 8 4.5"><path d="M0 0 H8 L4 4.5 Z" fill="#7a7a7a"></path></svg>
<svg style="left:180.5px;top:266px" width="4" height="16" viewBox="0 0 4 16"><rect x="0" y="0" width="3" height="3" fill="#a0a0a0"></rect><rect x="0" y="6" width="3" height="3" fill="#a0a0a0"></rect><rect x="0" y="12" width="3" height="3" fill="#a0a0a0"></rect></svg>
<div class="a" style="left:206px;top:257px;width:164px;height:35px;background:#ffffff;border:1px solid #c6c6c6"></div>
<svg style="left:225px;top:267px" width="18" height="16" viewBox="0 0 18 16"><path d="M1.2 1 L16.8 15 M16.8 1 L1.2 15" stroke="#c4c4c4" stroke-width="2.6" stroke-linecap="round"></path></svg>
<svg style="left:278px;top:266px" width="20" height="17" viewBox="0 0 20 17"><path d="M1.5 9.5 L6.5 15 L18.5 1.5" fill="none" stroke="#c4c4c4" stroke-width="3" stroke-linecap="round" stroke-linejoin="round"></path></svg>
<div class="t" style="left: 333px; top: 260px; font-size: 29.71px; color: rgb(89, 89, 89); font-family: &quot;Liberation Serif&quot;, serif; font-weight: bold; transform: scaleX(0.7231);"><i>f</i><i style="font-size:0.8em">x</i></div>
<div class="a" style="left:374px;top:257px;width:1207px;height:35px;background:#ffffff;border:1px solid #c6c6c6"></div>
<svg style="left:1561px;top:271.5px" width="13.5" height="9" viewBox="0 0 13.5 9"><polyline points="2,2 6.75,7 11.5,2" fill="none" stroke="#7a7a7a" stroke-width="3"></polyline></svg>
<div class="a" style="left:1093px;top:307px;width:202px;height:58px;background:#d2d2d2;"></div>
<div class="a" style="left:83px;top:307px;width:1px;height:58px;background:#ababab;"></div>
<div class="a" style="left:285px;top:307px;width:1px;height:58px;background:#ababab;"></div>
<div class="a" style="left:487px;top:307px;width:1px;height:58px;background:#ababab;"></div>
<div class="a" style="left:689px;top:307px;width:1px;height:58px;background:#ababab;"></div>
<div class="a" style="left:891px;top:307px;width:1px;height:58px;background:#ababab;"></div>
<div class="a" style="left:1093px;top:307px;width:1px;height:58px;background:#ababab;"></div>
<div class="a" style="left:1295px;top:307px;width:1px;height:58px;background:#ababab;"></div>
<div class="a" style="left:1497px;top:307px;width:1px;height:58px;background:#ababab;"></div>
<div class="a" style="left:2px;top:365px;width:1556px;height:1px;background:#9e9e9e;"></div>
<svg style="left:29px;top:311px" width="52" height="51" viewBox="0 0 52 51"><path d="M51 0 V51 H0 Z" fill="#b4b4b4"></path></svg>
<div class="t" style="left: 171.7px; top: 317.31px; font-size: 43.48px; color: rgb(0, 0, 0); transform: scaleX(0.8828);">A</div>
<div class="t" style="left: 374.13px; top: 317.31px; font-size: 43.48px; color: rgb(0, 0, 0); transform: scaleX(0.8583);">B</div>
<div class="t" style="left: 574.99px; top: 317.31px; font-size: 43.48px; color: rgb(0, 0, 0); transform: scaleX(0.8571);">C</div>
<div class="t" style="left: 775.52px; top: 317.31px; font-size: 43.48px; color: rgb(0, 0, 0); transform: scaleX(0.9259);">D</div>
<div class="t" style="left: 983.58px; top: 317.31px; font-size: 43.48px; color: rgb(0, 0, 0); transform: scaleX(0.64);">E</div>
<div class="t" style="left: 1184.34px; top: 317.31px; font-size: 43.48px; color: rgb(33, 115, 70); transform: scaleX(0.7864);">F</div>
<div class="t" style="left: 1381.51px; top: 317.31px; font-size: 43.48px; color: rgb(0, 0, 0); transform: scaleX(0.8966);">G</div>
<div class="a" style="left:2px;top:366px;width:81px;height:61px;background:#d2d2d2;"></div>
<div class="a" style="left:2px;top:426px;width:81px;height:1px;background:#ababab;"></div>
<div class="a" style="left:2px;top:487px;width:81px;height:1px;background:#ababab;"></div>
<div class="a" style="left:2px;top:548px;width:81px;height:1px;background:#ababab;"></div>
<div class="a" style="left:2px;top:609px;width:81px;height:1px;background:#ababab;"></div>
<div class="a" style="left:2px;top:670px;width:81px;height:1px;background:#ababab;"></div>
<div class="a" style="left:2px;top:731px;width:81px;height:1px;background:#ababab;"></div>
<div class="a" style="left:2px;top:792px;width:81px;height:1px;background:#ababab;"></div>
<div class="a" style="left:2px;top:853px;width:81px;height:1px;background:#ababab;"></div>
<div class="a" style="left:2px;top:914px;width:81px;height:1px;background:#ababab;"></div>
<div class="a" style="left:2px;top:975px;width:81px;height:1px;background:#ababab;"></div>
<div class="a" style="left:82px;top:365px;width:2px;height:62px;background:#217346;"></div>
<div class="a" style="left:83px;top:427px;width:1px;height:524px;background:#ababab;"></div>
<svg style="left:0px;top:0px" width="60" height="420" viewBox="0 0 60 420"><path d="M46.1 381.8 V411.8 H42.4 V386.9 L35.4 389.9 V386.1 L44.8 381.8 Z" fill="#217346"></path></svg>
<div class="t" style="left: 30.3px; top: 437.01px; font-size: 43.48px; color: rgb(0, 0, 0); transform: scaleX(1);">2</div>
<div class="t" style="left: 30.57px; top: 498.01px; font-size: 43.48px; color: rgb(0, 0, 0); transform: scaleX(0.9318);">3</div>
<div class="t" style="left: 30.02px; top: 559.01px; font-size: 43.48px; color: rgb(0, 0, 0); transform: scaleX(0.9773);">4</div>
<div class="t" style="left: 31.09px; top: 620.01px; font-size: 43.48px; color: rgb(0, 0, 0); transform: scaleX(0.9091);">5</div>
<div class="t" style="left: 29.55px; top: 681.01px; font-size: 43.48px; color: rgb(0, 0, 0); transform: scaleX(0.9762);">6</div>
<div class="t" style="left: 30.5px; top: 742.01px; font-size: 43.48px; color: rgb(0, 0, 0); transform: scaleX(1);">7</div>
<div class="t" style="left: 30.57px; top: 803.01px; font-size: 43.48px; color: rgb(0, 0, 0); transform: scaleX(0.9318);">8</div>
<div class="t" style="left: 29.55px; top: 864.01px; font-size: 43.48px; color: rgb(0, 0, 0); transform: scaleX(0.9762);">9</div>
<div class="t" style="left: 20.79px; top: 925.01px; font-size: 43.48px; color: rgb(0, 0, 0); transform: scaleX(0.9372);">10</div>
<div class="a" style="left:285px;top:366px;width:1px;height:585px;background:#d4d4d4;"></div>
<div class="a" style="left:487px;top:366px;width:1px;height:585px;background:#d4d4d4;"></div>
<div class="a" style="left:689px;top:366px;width:1px;height:585px;background:#d4d4d4;"></div>
<div class="a" style="left:891px;top:366px;width:1px;height:585px;background:#d4d4d4;"></div>
<div class="a" style="left:1093px;top:366px;width:1px;height:585px;background:#d4d4d4;"></div>
<div class="a" style="left:1295px;top:366px;width:1px;height:585px;background:#d4d4d4;"></div>
<div class="a" style="left:1497px;top:366px;width:1px;height:585px;background:#d4d4d4;"></div>
<div class="a" style="left:1557px;top:366px;width:1px;height:585px;background:#999999;"></div>
<div class="a" style="left:84px;top:426px;width:1473px;height:1px;background:#d4d4d4;"></div>
<div class="a" style="left:84px;top:487px;width:1473px;height:1px;background:#d4d4d4;"></div>
<div class="a" style="left:84px;top:548px;width:1473px;height:1px;background:#d4d4d4;"></div>
<div class="a" style="left:84px;top:609px;width:1473px;height:1px;background:#d4d4d4;"></div>
<div class="a" style="left:84px;top:670px;width:1473px;height:1px;background:#d4d4d4;"></div>
<div class="a" style="left:84px;top:731px;width:1473px;height:1px;background:#d4d4d4;"></div>
<div class="a" style="left:84px;top:792px;width:1473px;height:1px;background:#d4d4d4;"></div>
<div class="a" style="left:84px;top:853px;width:1473px;height:1px;background:#d4d4d4;"></div>
<div class="a" style="left:84px;top:914px;width:1473px;height:1px;background:#d4d4d4;"></div>
<div class="a" style="left:2px;top:951px;width:1556px;height:1px;background:#9e9e9e;"></div>
<div class="a" style="left:285px;top:366px;width:202px;height:61px;background:#ffff00;"></div>
<div class="a" style="left:487px;top:366px;width:202px;height:61px;background:#00b0f0;"></div>
<div class="a" style="left:689px;top:366px;width:202px;height:61px;background:#00b050;"></div>
<svg style="left:670px;top:366px" width="19" height="19" viewBox="0 0 19 19"><path d="M0 0 H19 V19 Z" fill="#ff0000"></path></svg>
<div class="t" style="left: 120.75px; top: 382px; font-size: 33.77px; color: rgb(0, 0, 0); font-weight: bold; transform: scaleX(0.9496);">Gadgets</div>
<div class="t" style="left: 347.4px; top: 382px; font-size: 33.77px; color: rgb(0, 0, 0); font-weight: bold; transform: scaleX(0.9484);">Price</div>
<div class="t" style="left: 519.7px; top: 382px; font-size: 33.77px; color: rgb(0, 0, 0); font-weight: bold; transform: scaleX(1.0032);">Quantity</div>
<div class="t" style="left: 751.7px; top: 382px; font-size: 33.77px; color: rgb(0, 0, 0); font-weight: bold; transform: scaleX(1.0334);">Total</div>
<div class="t" style="left: 136.45px; top: 447px; font-size: 30.43px; color: rgb(0, 0, 0); transform: scaleX(1.0252);">Laptop</div>
<div class="t" style="left: 332.21px; top: 447px; font-size: 30.43px; color: rgb(0, 0, 0); transform: scaleX(0.9949);">250,000</div>
<div class="t" style="left: 579.99px; top: 447px; font-size: 30.43px; color: rgb(0, 0, 0); transform: scaleX(1.0133);">6</div>
<div class="t" style="left: 128.43px; top: 507.81px; font-size: 30.43px; color: rgb(0, 0, 0); transform: scaleX(0.9734);">Speaker</div>
<div class="t" style="left: 339.79px; top: 507.81px; font-size: 30.43px; color: rgb(0, 0, 0); transform: scaleX(1.0052);">17,450</div>
<div class="t" style="left: 579.8px; top: 507.81px; font-size: 30.43px; color: rgb(0, 0, 0); transform: scaleX(1);">9</div>
<div class="t" style="left: 136.41px; top: 568.61px; font-size: 30.43px; color: rgb(0, 0, 0); transform: scaleX(1.0454);">Mouse</div>
<div class="t" style="left: 349.2px; top: 568.61px; font-size: 30.43px; color: rgb(0, 0, 0); transform: scaleX(0.9972);">5,500</div>
<div class="t" style="left: 572.23px; top: 568.61px; font-size: 30.43px; color: rgb(0, 0, 0); transform: scaleX(0.9864);">12</div>
<div class="t" style="left: 730.68px; top: 443.31px; font-size: 30.43px; color: rgb(0, 0, 0); transform: scaleX(1.0094);">1500000</div>
<div class="t" style="left: 739.99px; top: 504.31px; font-size: 30.43px; color: rgb(0, 0, 0); transform: scaleX(1.0041);">157050</div>
<div class="t" style="left: 748.2px; top: 565.31px; font-size: 30.43px; color: rgb(0, 0, 0); transform: scaleX(1.0039);">66000</div>
<svg style="left:1092px;top:364px" width="206" height="65" viewBox="0 0 206 65"><rect x="1" y="1" width="203" height="62" fill="none" stroke="#217346" stroke-width="2"></rect><rect x="199" y="58" width="7" height="7" fill="#217346" stroke="#fff" stroke-width="1"></rect></svg>
<svg style="left:679px;top:384px" width="21" height="298" viewBox="0 0 21 298"><path d="M10.2 0.8 L20.3 29.4 L13 25.9 V297 H8 V25.9 L0.6 29.4 Z" fill="#000"></path></svg>
<div class="t" style="left: 519.03px; top: 687.41px; font-size: 37.39px; color: rgb(0, 0, 0); font-weight: bold; transform: scaleX(0.9666);">Small Red Triangle</div>
<svg style="left:1475px;top:759px" width="22" height="22" viewBox="0 0 22 22"><path d="M7.5 1.5 H14.8 V7.5 H20.8 V14.8 H14.8 V20.8 H7.5 V14.8 H1.5 V7.5 H7.5 Z" fill="#000"></path><path d="M6.7 0.7 H13.7 V6.7 H19.7 V13.7 H13.7 V19.7 H6.7 V13.7 H0.7 V6.7 H6.7 Z" fill="#fff" stroke="#000" stroke-width="1.4"></path></svg>
<div class="a" style="left:1558px;top:307px;width:30px;height:644px;background:#e6e6e6;"></div>
<div class="a" style="left:1559px;top:333px;width:26px;height:595px;background:#dadada;"></div>
<div class="a" style="left:1560px;top:308px;width:25px;height:25px;background:#ffffff;border:1px solid #7a7a7a"></div>
<svg style="left:1568px;top:317px" width="10" height="6" viewBox="0 0 10 6"><path d="M0 6 H10 L5 0 Z" fill="#7a7a7a"></path></svg>
<div class="a" style="left:1560px;top:333px;width:25px;height:267px;background:#ffffff;border:1px solid #7a7a7a;border-top:2px solid #7a7a7a"></div>
<div class="a" style="left:1560px;top:928px;width:25px;height:25px;background:#ffffff;border:1px solid #7a7a7a"></div>
<svg style="left:1567px;top:938px" width="11" height="6" viewBox="0 0 11 6"><path d="M0 0 H11 L5.5 6 Z" fill="#7a7a7a"></path></svg>
<div class="a" style="left:2px;top:951px;width:1586px;height:34px;background:#e6e6e6;"></div>
<div class="a" style="left:2px;top:951px;width:1556px;height:1px;background:#9e9e9e;"></div>
<svg style="left:30px;top:962px" width="8" height="11" viewBox="0 0 8 11"><path d="M7 0 V11 L0 5.5 Z" fill="#c4c4c4"></path></svg>
<svg style="left:65px;top:962px" width="8" height="11" viewBox="0 0 8 11"><path d="M0 0 V11 L7 5.5 Z" fill="#c4c4c4"></path></svg>
<div class="a" style="left:120px;top:951px;width:89px;height:31px;background:#ffffff;border-left:1px solid #a0a0a0;border-right:1px solid #a0a0a0"></div>
<div class="a" style="left:120px;top:980px;width:89px;height:2px;background:#217346;"></div>
<div class="t" style="left: 132.6px; top: 956.61px; font-size: 19.13px; color: rgb(33, 115, 70); font-weight: bold; transform: scaleX(0.9946);">Sheet1</div>
<svg style="left:248px;top:957px" width="22" height="22" viewBox="0 0 22 22"><circle cx="11" cy="11" r="10.2" fill="none" stroke="#7a7a7a" stroke-width="1.4"></circle><path d="M11 5.5 V16.5 M5.5 11 H16.5" stroke="#7a7a7a" stroke-width="1.5"></path></svg>
<svg style="left:950px;top:960px" width="3" height="15" viewBox="0 0 3 15"><rect x="0" y="0" width="3" height="3" fill="#a8a8a8"></rect><rect x="0" y="6" width="3" height="3" fill="#a8a8a8"></rect><rect x="0" y="12" width="3" height="3" fill="#a8a8a8"></rect></svg>
<div class="a" style="left:970px;top:955px;width:589px;height:25px;background:#dadada;"></div>
<div class="a" style="left:970px;top:955px;width:25px;height:25px;background:#ffffff;border:1px solid #7a7a7a"></div>
<svg style="left:979px;top:962px" width="6" height="11" viewBox="0 0 6 11"><path d="M6 0 V11 L0 5.5 Z" fill="#7a7a7a"></path></svg>
<div class="a" style="left:994px;top:955px;width:472px;height:25px;background:#ffffff;border:1px solid #7a7a7a;border-left:2px solid #7a7a7a"></div>
<div class="a" style="left:1534px;top:955px;width:25px;height:25px;background:#ffffff;border:1px solid #7a7a7a"></div>
<svg style="left:1544px;top:962px" width="6" height="11" viewBox="0 0 6 11"><path d="M0 0 V11 L6 5.5 Z" fill="#7a7a7a"></path></svg>
<div class="a" style="left:2px;top:985px;width:1586px;height:33px;background:#f3f2f1;border-top:1px solid #d4d4d4"></div>
<div class="t" style="left: 13.05px; top: 995.01px; font-size: 15.65px; color: rgb(68, 68, 68); transform: scaleX(0.9461);">Ready</div>
<svg style="left:83px;top:993px" width="22" height="19" viewBox="0 0 22 19"><path d="M9 17.25 H0.75 V0.75 H21.25 V7" fill="none" stroke="#444" stroke-width="1.5"></path><line x1="1" y1="3.3" x2="21" y2="3.3" stroke="#444" stroke-width="1.5"></line><path d="M3.5 7 H9 M3.5 10 H6.5 M3.5 13 H6.5" stroke="#444" stroke-width="1.4"></path><circle cx="14.7" cy="12.4" r="5.6" fill="#f3f2f1" stroke="#444" stroke-width="1.6"></circle><circle cx="14.7" cy="12.4" r="2.5" fill="#444"></circle></svg>
<svg style="left:130px;top:991px" width="24" height="22" viewBox="0 0 24 22"><circle cx="9.5" cy="3.5" r="2.3" fill="none" stroke="#444" stroke-width="1.5"></circle><path d="M5.5 8 C3 8.5 0.3 7 1 5.5 C1.8 4 4 6 6 6.8 Q9.5 8 13 6.8 C15.5 6 18.2 4.5 18.5 6.5 C18.7 8.3 15.5 8.7 13.3 9.3" fill="none" stroke="#444" stroke-width="1.5" stroke-linecap="round"></path><path d="M5.6 8 C6 11 5.6 14 5 17 C4.6 19.5 6.2 20.8 7.8 19.6" fill="none" stroke="#444" stroke-width="1.5" stroke-linecap="round"></path><path d="M13.3 9.3 V12.6" stroke="#444" stroke-width="1.5" stroke-linecap="round"></path><path d="M10.1 16 L14.5 20.6 L22.4 12.9" fill="none" stroke="#444" stroke-width="1.6"></path></svg>
<div class="t" style="left: 157.5px; top: 995.01px; font-size: 15.65px; color: rgb(68, 68, 68); transform: scaleX(0.9792);">Accessibility: Good to go</div>
<div class="a" style="left:1126px;top:986px;width:60px;height:32px;background:#d2d0ce;"></div>
<svg style="left:1145px;top:991px" width="21" height="20" viewBox="0 0 21 20"><rect x="0.75" y="0.75" width="19.5" height="18.5" fill="none" stroke="#555" stroke-width="1.5"></rect><path d="M7.25 1 V19 M13.75 1 V19 M1 6.9 H20 M1 13 H20" stroke="#555" stroke-width="1.5"></path></svg>
<svg style="left:1205px;top:991px" width="22" height="20" viewBox="0 0 22 20"><rect x="0.75" y="0.75" width="20.5" height="18.5" fill="none" stroke="#555" stroke-width="1.5"></rect><rect x="4" y="3.5" width="14" height="13" fill="none" stroke="#555" stroke-width="1.3"></rect><path d="M7 7 H15 M7 10 H15 M7 13 H15" stroke="#555" stroke-width="1.3"></path></svg>
<svg style="left:1265px;top:991px" width="22" height="20" viewBox="0 0 22 20"><rect x="0.75" y="0.75" width="20.5" height="18.5" fill="none" stroke="#555" stroke-width="1.5"></rect><path d="M7.2 1 V11 M12.6 1 V11.2 H1" fill="none" stroke="#555" stroke-width="1.5"></path></svg>
<div class="a" style="left:1314px;top:1001px;width:12px;height:1.5px;background:#555;"></div>
<div class="a" style="left:1334px;top:1000.5px;width:148px;height:2.5px;background:#444;"></div>
<div class="a" style="left:1407px;top:997.5px;width:2px;height:8px;background:#444;"></div>
<div class="a" style="left:1431px;top:993px;width:9px;height:17px;background:#7a7a7a;"></div>
<svg style="left:1490px;top:996px" width="12" height="12" viewBox="0 0 12 12"><path d="M6 0 V12 M0 6 H12" stroke="#555" stroke-width="1.4"></path></svg>
<div class="t" style="left: 1520.6px; top: 994.61px; font-size: 15.36px; color: rgb(68, 68, 68); transform: scaleX(0.9892);">210%</div>

</body></html>
